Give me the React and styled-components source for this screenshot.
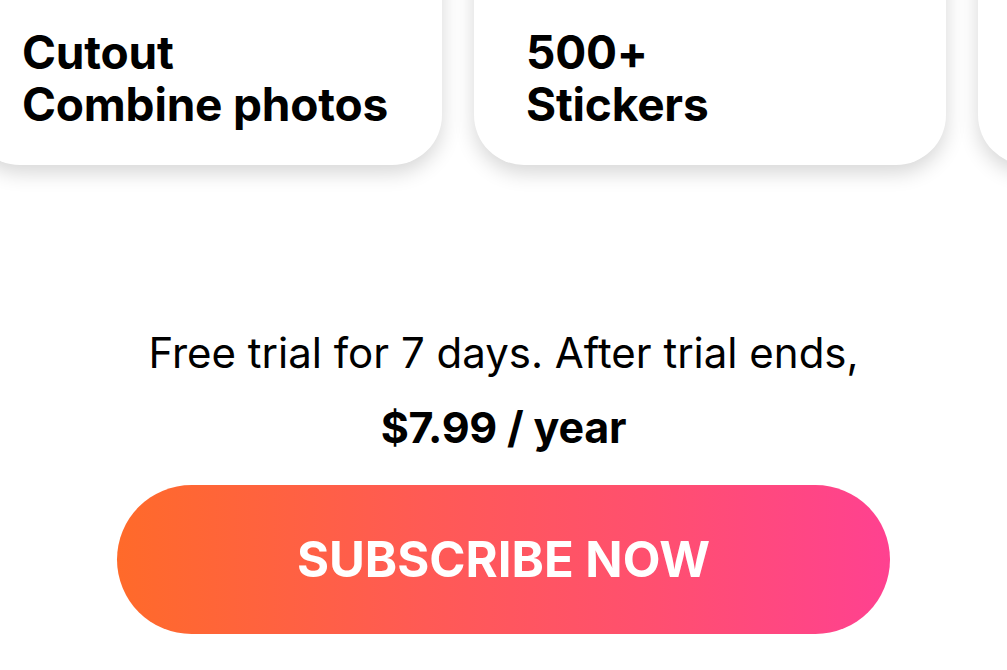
import styled, { createGlobalStyle } from 'styled-components';

const Global = createGlobalStyle`
    html, body {
        margin: 0;
        padding: 0;
        background: #fff;
    }
    body {
        font-family: Inter, "Noto Sans", "Liberation Sans", sans-serif;
        color: #000;
        overflow: hidden;
    }
`

const Page = styled.div`
    width: 1007px;
    height: 670px;
    overflow: hidden;
    display: flex;
    flex-direction: column;
    align-items: center;
`

const CardRow = styled.div`
    align-self: flex-start;
    display: flex;
    gap: 32px;
    margin-top: -100px;
    margin-left: -30px;
    padding-bottom: 30px;
`

const Card = styled.div`
    flex: 0 0 472px;
    height: 265px;
    box-sizing: border-box;
    padding: 0 52px 35px;
    display: flex;
    flex-direction: column;
    justify-content: flex-end;
    background: #fff;
    border-radius: 0 0 50px 50px;
    box-shadow: 0 8px 20px rgba(0, 0, 0, 0.16);
`

const CardTitle = styled.div`
    font-size: 46px;
    line-height: 52px;
    font-weight: 700;
    letter-spacing: -0.2px;
`

const Trial = styled.p`
    margin: 133px 0 0;
    font-size: 42px;
    line-height: 50px;
    font-weight: 400;
    letter-spacing: 0;
`

const Price = styled.p`
    margin: 24px 0 0;
    font-size: 43px;
    line-height: 50px;
    font-weight: 700;
    letter-spacing: -0.2px;
`

const SubscribeButton = styled.button`
    margin-top: 33px;
    width: 773px;
    height: 149px;
    border: none;
    border-radius: 75px;
    background: linear-gradient(90deg, #ff6a2a 0%, #ff5a55 40%, #ff4f70 70%, #ff4190 100%);
    color: #fff;
    font-family: inherit;
    font-size: 49px;
    font-weight: 700;
    letter-spacing: 0;
    cursor: pointer;
`

const features = [
    ['Cutout', 'Combine photos'],
    ['500+', 'Stickers'],
    ['', ''],
]

function App() {
    return (
        <Page>
            <Global />
            <CardRow>
                {features.map((lines, i) => (
                    <Card key={i}>
                        {lines.map((l, j) => <CardTitle key={j}>{l || '\u00a0'}</CardTitle>)}
                    </Card>
                ))}
            </CardRow>
            <Trial>Free trial for 7 days. After trial ends,</Trial>
            <Price>$7.99 / year</Price>
            <SubscribeButton>SUBSCRIBE NOW</SubscribeButton>
        </Page>
    );
}

export default App;
